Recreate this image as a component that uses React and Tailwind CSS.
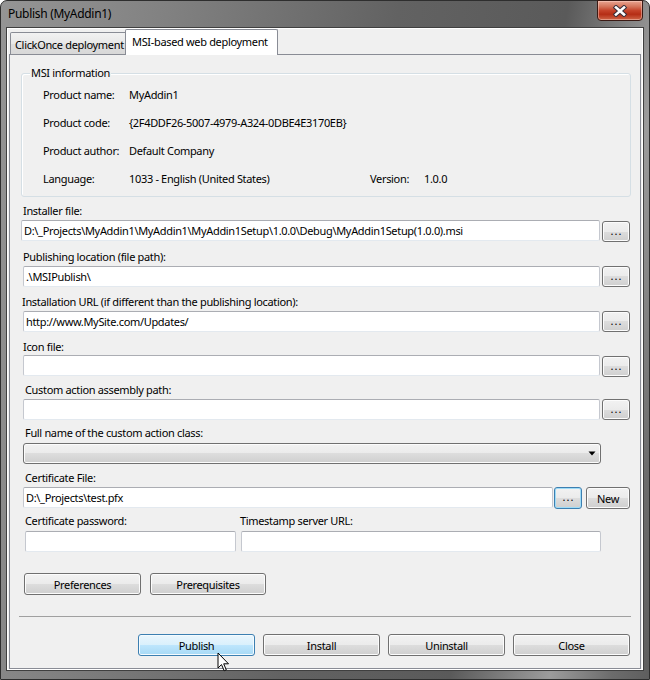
import React from "react";

const FONT = "font-['Noto_Sans',sans-serif] text-[11px] tracking-[-0.33px]";
const BTN_N =
  "flex items-center justify-center rounded-[3px] border border-[#707070] bg-[linear-gradient(to_bottom,#f2f2f2_0%,#ebebeb_50%,#dddddd_50%,#cfcfcf_100%)] shadow-[inset_0_0_0_1px_#fcfcfc] text-black leading-none";
const BTN_H =
  "flex items-center justify-center rounded-[3px] border border-[#3c7fb1] bg-[linear-gradient(to_bottom,#eaf6fd_0%,#d9f0fc_50%,#bee6fd_50%,#a7d9f5_100%)] shadow-[inset_0_0_0_1px_#f4fbff] text-black leading-none";
const BTN_F =
  "flex items-center justify-center rounded-[3px] border border-[#3c7fb1] bg-[linear-gradient(to_bottom,#f2f2f2_0%,#ebebeb_50%,#dddddd_50%,#cfcfcf_100%)] shadow-[inset_0_0_0_1px_#9fdcf7] text-black leading-none";
const INPUT =
  "h-[21px] bg-white border border-[#c5c8cf] border-t-[#abadb3] border-b-[#e3e9ef] rounded-[2px] pl-[2px] flex items-center leading-none whitespace-nowrap overflow-hidden";
const LABEL = "h-[16px] leading-[16px] whitespace-nowrap";

function Dots() {
  return <span className="text-[11px] tracking-[1px] pb-[3px] pl-[1px]">...</span>;
}

function CloseX() {
  return (
    <svg width="16" height="12" viewBox="0 0 16 12">
      <path d="M4 2.5 L12 9.5 M12 2.5 L4 9.5" stroke="#3a2f3a" strokeWidth="4.6" strokeLinecap="square" />
      <path d="M4 2.5 L12 9.5 M12 2.5 L4 9.5" stroke="#ffffff" strokeWidth="2.6" strokeLinecap="square" />
    </svg>
  );
}

function Cursor() {
  return (
    <svg className="absolute left-[216px] top-[651px]" width="13" height="21" viewBox="0 0 13 21">
      <path
        d="M1 1 L1 16 L4.5 12.6 L7.2 18.8 L9.3 17.9 L6.7 11.8 L11.5 11.8 Z"
        fill="#ffffff"
        stroke="#000000"
        strokeWidth="1"
        strokeLinejoin="miter"
      />
    </svg>
  );
}

export default function App() {
  return (
    <div
      className={`relative w-[650px] h-[680px] flex flex-col rounded-t-[7px] border border-[#2e2e2e] bg-[linear-gradient(100deg,#959595_0%,#818181_22%,#626262_52%,#5a5a5a_74%,#9c9c9c_87%,#6c6c6c_95%,#5e5e5e_100%)] text-black ${FONT}`}
    >
      {/* title bar */}
      <div className="h-[26px] flex items-start justify-between">
        <span className="pl-[7px] pt-[5px] leading-[16px] text-[12px] tracking-[-0.3px] text-black">Publish (MyAddin1)</span>
        <div className="-mt-[1px] mr-[6px] w-[46px] h-[21px] rounded-b-[4px] border border-[#3b1a14] bg-[linear-gradient(to_bottom,#e9a592_0%,#d4735a_30%,#c5432a_50%,#b52d15_70%,#cf6648_100%)] shadow-[inset_0_0_0_1px_rgba(255,220,210,0.45)] flex items-center justify-center">
          <CloseX />
        </div>
      </div>

      {/* client frame */}
      <div className="flex-1 mx-[5px] mb-[8px] border border-[#3f3f3f] flex flex-col">
        <div className="flex-1 border border-white bg-[#f0f0f0] flex flex-col">
          {/* tabs */}
          <div className="h-[25px] pl-[2px] flex items-end">
            <div className="h-[22px] w-[117px] pl-[4px] pt-[1px] border border-b-0 border-[#898c95] rounded-t-[2px] bg-[linear-gradient(to_bottom,#f2f2f2_0%,#e8e8e8_50%,#dedede_50%,#d8d8d8_100%)] flex items-center leading-none whitespace-nowrap">
              ClickOnce deployment
            </div>
            <div className="relative z-10 -ml-[2px] -mb-[1px] h-[26px] w-[153px] pl-[6px] pb-[2px] border border-b-0 border-[#898c95] rounded-t-[2px] bg-white flex items-center leading-none whitespace-nowrap">
              MSI-based web deployment
            </div>
          </div>

          {/* panel */}
          <div className="flex-1 mx-[1px] border border-[#898c95] flex flex-col">
            {/* group box */}
            <div className="relative mt-[18px] ml-[11px] mr-[9px] h-[124px] border border-[#d5dfe5] rounded-[3px] shadow-[inset_1px_1px_0_#ffffff]">
              <span className="absolute left-[8px] -top-[9px] px-[1px] bg-[#f0f0f0] leading-[16px]">MSI information</span>
              <div className="pt-[13px] pl-[21px] flex flex-col gap-[12px]">
                <div className="flex h-[16px] leading-[16px]">
                  <span className="w-[86px]">Product name:</span>
                  <span>MyAddin1</span>
                </div>
                <div className="flex h-[16px] leading-[16px]">
                  <span className="w-[86px]">Product code:</span>
                  <span>{"{2F4DDF26-5007-4979-A324-0DBE4E3170EB}"}</span>
                </div>
                <div className="flex h-[16px] leading-[16px]">
                  <span className="w-[86px]">Product author:</span>
                  <span>Default Company</span>
                </div>
                <div className="flex h-[16px] leading-[16px]">
                  <span className="w-[86px]">Language:</span>
                  <span className="w-[241px]">1033 - English (United States)</span>
                  <span className="w-[54px]">Version:</span>
                  <span>1.0.0</span>
                </div>
              </div>
            </div>

            {/* Installer file */}
            <div className={`mt-[6px] ml-[13px] ${LABEL}`}>Installer file:</div>
            <div className="mt-[1px] ml-[11px] h-[21px] flex items-start">
              <div className={`w-[579px] ${INPUT} pl-[1px]`}>
                {"D:\\_Projects\\MyAddin1\\MyAddin1\\MyAddin1Setup\\1.0.0\\Debug\\MyAddin1Setup(1.0.0).msi"}
              </div>
              <div className={`shrink-0 ml-[2px] mt-[1px] w-[28px] h-[21px] ${BTN_N}`}>
                <Dots />
              </div>
            </div>

            {/* Publishing location */}
            <div className={`mt-[8px] ml-[13px] ${LABEL}`}>Publishing location (file path):</div>
            <div className="mt-[1px] ml-[13px] h-[21px] flex items-start">
              <div className={`w-[577px] ${INPUT}`}>{".\\MSIPublish\\"}</div>
              <div className={`shrink-0 ml-[2px] w-[28px] h-[21px] ${BTN_N}`}>
                <Dots />
              </div>
            </div>

            {/* Installation URL */}
            <div className={`mt-[7px] ml-[12px] ${LABEL}`}>Installation URL (if different than the publishing location):</div>
            <div className="mt-[1px] ml-[13px] h-[21px] flex items-start">
              <div className={`w-[577px] ${INPUT}`}>http://www.MySite.com/Updates/</div>
              <div className={`shrink-0 ml-[2px] w-[28px] h-[21px] ${BTN_N}`}>
                <Dots />
              </div>
            </div>

            {/* Icon file */}
            <div className={`mt-[7px] ml-[13px] ${LABEL}`}>Icon file:</div>
            <div className="ml-[13px] h-[21px] flex items-start">
              <div className={`w-[577px] ${INPUT}`}></div>
              <div className={`shrink-0 ml-[2px] mt-[1px] w-[28px] h-[21px] ${BTN_N}`}>
                <Dots />
              </div>
            </div>

            {/* Custom action assembly path */}
            <div className={`mt-[6px] ml-[15px] ${LABEL}`}>Custom action assembly path:</div>
            <div className="mt-[1px] ml-[13px] h-[21px] flex items-start">
              <div className={`w-[577px] ${INPUT}`}></div>
              <div className={`shrink-0 ml-[2px] w-[28px] h-[21px] ${BTN_N}`}>
                <Dots />
              </div>
            </div>

            {/* Full name of custom action class */}
            <div className={`mt-[5px] ml-[15px] ${LABEL}`}>Full name of the custom action class:</div>
            <div className={`mt-[2px] ml-[13px] w-[578px] h-[21px] ${BTN_N} justify-end pr-[4px]`}>
              <svg width="8" height="5" viewBox="0 0 8 5">
                <path d="M0.5 0.5 L7.5 0.5 L4 4.5 Z" fill="#000" />
              </svg>
            </div>

            {/* Certificate file */}
            <div className={`mt-[6px] ml-[15px] ${LABEL}`}>Certificate File:</div>
            <div className="mt-[1px] ml-[13px] h-[21px] flex items-start">
              <div className={`w-[530px] ${INPUT}`}>{"D:\\_Projects\\test.pfx"}</div>
              <div className={`shrink-0 ml-[1px] w-[28px] h-[22px] ${BTN_F}`}>
                <Dots />
              </div>
              <div className={`shrink-0 ml-[4px] w-[44px] h-[22px] ${BTN_N}`}>New</div>
            </div>

            {/* Certificate password / Timestamp */}
            <div className="mt-[5px] ml-[15px] flex">
              <div className={`w-[215px] ${LABEL}`}>Certificate password:</div>
              <div className={LABEL}>Timestamp server URL:</div>
            </div>
            <div className="mt-[2px] ml-[15px] h-[21px] flex items-start">
              <div className={`w-[211px] ${INPUT}`}></div>
              <div className={`ml-[5px] w-[360px] ${INPUT}`}></div>
            </div>

            {/* Preferences / Prerequisites */}
            <div className="mt-[21px] ml-[14px] flex gap-[9px]">
              <div className={`w-[117px] h-[22px] ${BTN_N}`}>Preferences</div>
              <div className={`w-[116px] h-[22px] ${BTN_N}`}>Prerequisites</div>
            </div>

            {/* separator */}
            <div className="mt-[21px] ml-[9px] mr-[9px] h-px bg-[#a0a0a0]"></div>

            {/* bottom buttons */}
            <div className="mt-[17px] ml-[128px] flex gap-[8px]">
              <div className={`w-[117px] h-[22px] ${BTN_H}`}>Publish</div>
              <div className={`w-[117px] h-[22px] ${BTN_N}`}>Install</div>
              <div className={`w-[117px] h-[22px] ${BTN_N}`}>Uninstall</div>
              <div className={`w-[117px] h-[22px] ${BTN_N}`}>Close</div>
            </div>
          </div>
        </div>
      </div>

      <Cursor />
    </div>
  );
}
